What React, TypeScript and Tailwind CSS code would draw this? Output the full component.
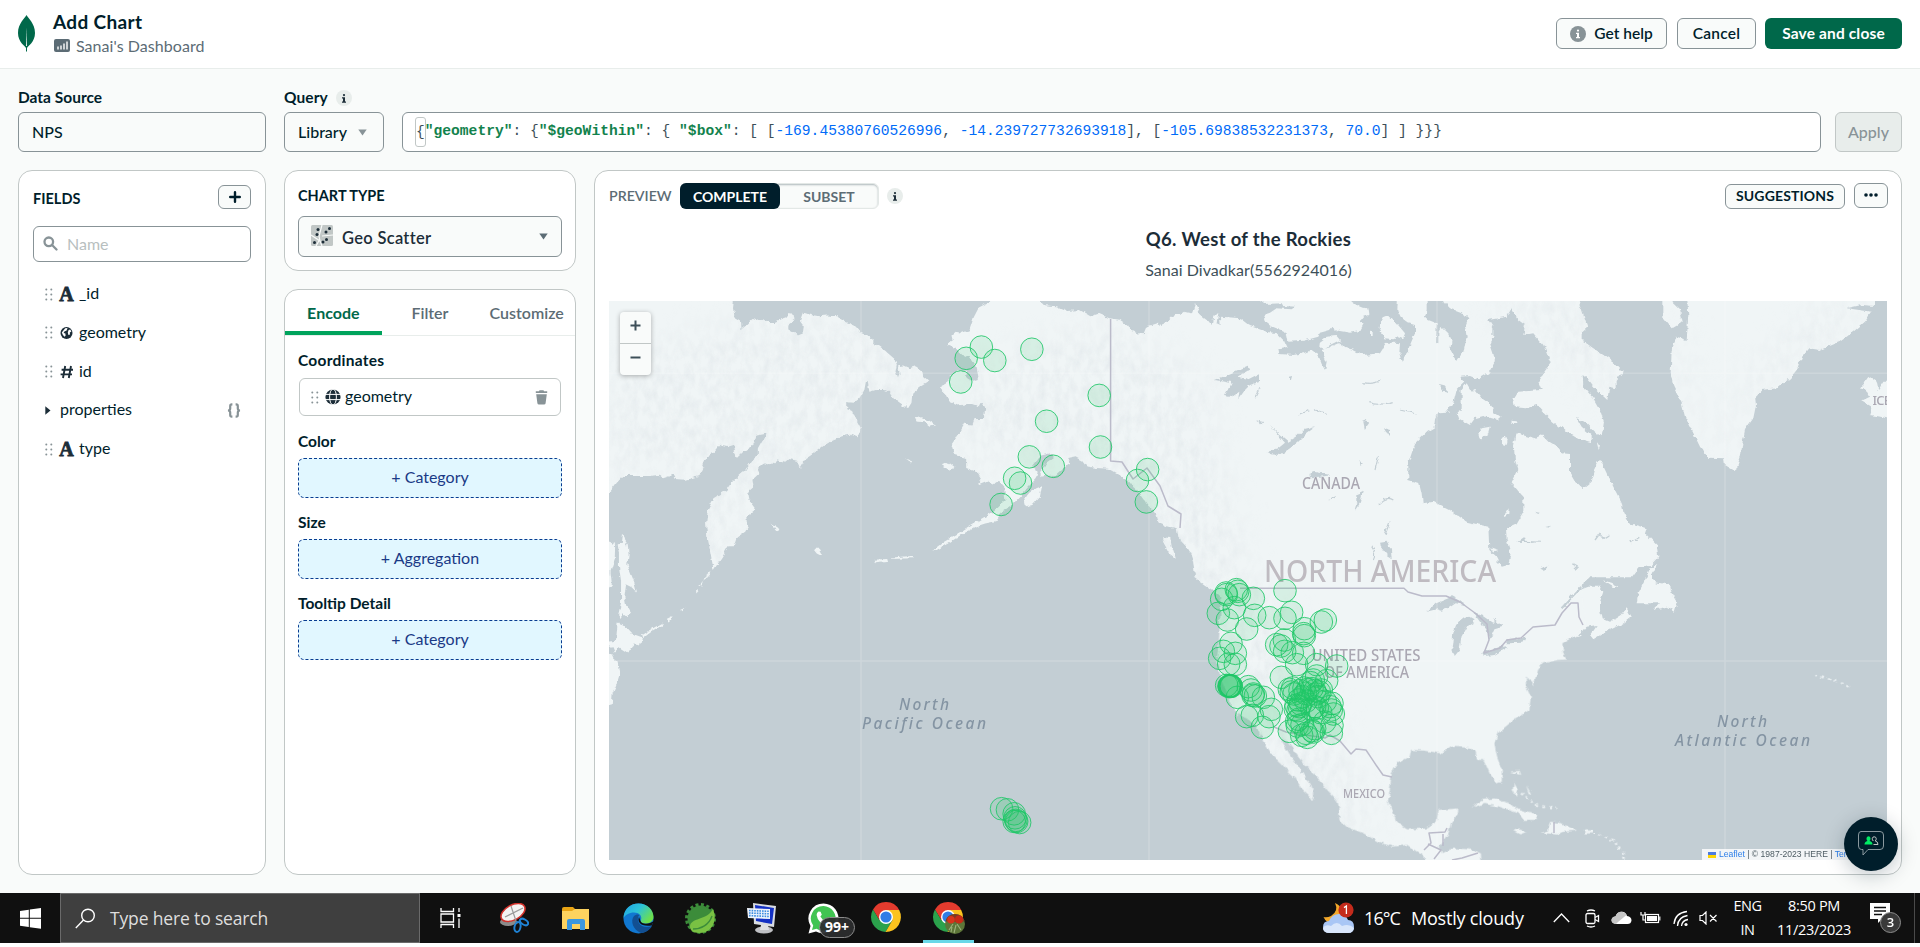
import React from "react";

/* ---------- small icons ---------- */

function Grip() {
  return (
    <svg width="8" height="13" viewBox="0 0 8 13" fill="#889397" className="shrink-0">
      {[1.5, 6.5, 11.5].map((y) => (
        <g key={y}>
          <circle cx="1.3" cy={y} r="1" />
          <circle cx="6.3" cy={y} r="1" />
        </g>
      ))}
    </svg>
  );
}

function LetterA() {
  return (
    <span className="w-[15px] text-center font-['Liberation_Serif',serif] text-[20px] leading-none font-bold text-[#1c2d38] [-webkit-text-stroke:0.8px_#1c2d38]">
      A
    </span>
  );
}

function Earth() {
  return (
    <svg width="14" height="14" viewBox="0 0 14 14" className="mx-[1px] shrink-0">
      <circle cx="6.5" cy="7" r="6" fill="#1c2d38" />
      <path d="M5.2 2.2 L7.5 2 L6.6 4.4 L4.4 5.4 L3.6 7 L5.4 7.6 L5.6 9.8 L4.4 10.8 L2.8 8.8 L1.8 6.4 Z M8.6 4 L10.2 3.6 L11.4 5.6 L9.8 6.4 L10 8.4 L8.4 9 L7.8 6.6 Z" fill="#fff" />
    </svg>
  );
}

function Hash() {
  return (
    <svg width="14" height="14" viewBox="0 0 14 14" className="mx-[1px] shrink-0" stroke="#1c2d38" strokeWidth="1.9" fill="none">
      <path d="M5.2 1 L3 13 M11 1 L8.8 13 M1.6 4.7 H13 M0.6 9.4 H12" />
    </svg>
  );
}

function Globe() {
  return (
    <svg width="16" height="16" viewBox="0 0 16 16" className="shrink-0">
      <circle cx="8" cy="8" r="7.6" fill="#1c2d38" />
      <g stroke="#fff" strokeWidth="1" fill="none">
        <path d="M0 5.4 H16 M0 10.6 H16" />
        <ellipse cx="8" cy="8" rx="3.4" ry="8" />
      </g>
    </svg>
  );
}

function Info() {
  return (
    <span className="flex h-4 w-4 items-center justify-center rounded-full bg-[#e8edeb]">
      <svg width="6" height="9" viewBox="0 0 6 9" fill="#1c2d38">
        <circle cx="3" cy="1.1" r="1.1" />
        <path d="M1 3.2 H4 V7.6 H5 V8.8 H1 V7.6 H2 V4.4 H1 Z" />
      </svg>
    </span>
  );
}

function Caret({ color }: { color: string }) {
  return (
    <svg width="9" height="7" viewBox="0 0 9 7" fill={color}>
      <path d="M0.3 0.5 H8.7 L4.5 6.6 Z" />
    </svg>
  );
}

/* ---------- map ---------- */

type Point = [number, number];

const tileA = "translate(600 290) scale(0.42091 0.36352)";
const tileB = "translate(1160 290) scale(0.33333)";
const tileC = "translate(1500 290) scale(0.33333)";
const tileD = "translate(1160 560) scale(0.4847 0.33333)";

const landA = [
  "0,0 316,0 318,30 316,50 320,75 335,85 336,108 345,100 362,80 372,85 385,78 400,88 415,88 430,80 442,75 448,66 460,68 462,82 450,90 447,105 465,118 470,125 482,120 484,100 475,85 482,62 500,68 520,72 540,70 562,72 585,88 605,98 620,118 640,128 655,150 680,170 700,190 705,205 702,225 708,240 712,228 708,210 720,208 735,215 750,210 765,222 768,240 780,252 765,262 755,272 742,285 740,310 732,325 715,312 700,300 690,282 675,275 655,275 640,280 636,250 632,250 628,275 615,300 603,310 585,308 585,325 600,332 608,355 620,380 612,405 595,398 575,402 550,415 530,430 510,448 488,465 475,490 468,470 450,465 440,475 420,468 405,482 388,475 375,490 378,505 362,522 365,545 350,560 352,572 370,600 358,612 350,620 352,650 345,665 325,680 318,705 305,705 290,735 270,770 262,720 255,680 252,640 256,605 272,570 300,550 312,530 330,510 345,495 360,470 375,455 375,435 385,415 398,395 372,400 365,425 345,440 325,462 320,440 318,425 305,430 285,425 270,445 250,460 243,480 248,490 238,510 225,515 205,522 180,520 175,508 150,518 140,508 120,512 100,512 55,512 40,530 21,560 0,580",
  "55,668 60,690 66,700 68,730 65,755 75,785 82,805 88,832 75,818 62,810 58,845 62,870 72,890 65,900 55,892 48,902 43,895 50,860 50,800 45,760 45,720 42,700 52,695",
  "0,690 21,690 36,700 35,740 25,775 28,810 21,820 0,820",
  "42,915 55,920 75,945 100,955 95,978 80,975 65,1000 45,985 35,995 30,980 0,985 0,970 38,965",
  "0,995 33,1000 30,1012 42,1025 46,1060 38,1090 30,1110 28,1140 0,1145",
  "945,0 930,30 900,48 888,75 878,110 860,118 845,115 835,125 838,138 825,150 845,160 862,180 880,190 895,215 900,245 885,250 870,240 872,222 850,222 835,235 825,255 805,268 820,285 830,308 850,318 880,312 900,320 905,308 915,325 912,355 890,355 885,370 865,368 850,400 835,425 840,445 850,460 870,465 870,490 895,500 905,520 898,535 920,525 935,535 948,525 960,540 963,580 935,610 905,630 870,655 850,670 820,690 795,712 790,720 800,715 830,695 860,672 890,655 915,645 935,640 950,615 980,590 1000,565 1015,545 1035,520 1040,500 1025,490 1048,455 1075,448 1078,460 1060,475 1050,495 1045,515 1060,510 1080,512 1100,490 1115,478 1110,465 1130,460 1145,470 1155,485 1180,490 1210,492 1230,505 1250,520 1260,535 1275,550 1300,590 1318,610 1325,640 1345,650 1370,655 1378,665 1380,690 1400,715 1412,745 1415,775 1412,790 1430,805 1455,825 1480,850 1478,880 1472,920 1475,960 1470,1000 1475,1040 1490,1080 1510,1130 1530,1170 1568,1200 1568,118 1550,98 1520,82 1488,75 1475,95 1472,75 1465,55 1455,85 1448,98 1440,82 1425,70 1415,40 1405,60 1395,62 1380,55 1365,70 1345,75 1335,90 1310,100 1298,102 1292,118 1275,120 1262,112 1255,98 1235,82 1210,78 1185,65 1165,72 1140,55 1110,58 1085,45 1055,42 1045,30 1040,0",
  "748,352 765,350 780,360 796,372 785,376 772,364 752,362",
  "812,482 828,474 842,486 832,497",
  "1008,575 1020,558 1038,545 1050,540 1045,570 1030,590 1012,595",
  "728,465 742,472 736,478",
  "405,640 424,655 420,662",
  "508,712 520,712 528,730 515,722",
  "650,742 680,740 682,748 655,752",
  "690,736 742,732 742,738 690,740",
  "262,772 260,785 248,800 252,785",
  "245,800 240,815 236,812",
  "100,950 130,928 150,915 148,922 120,942 102,958",
  "158,905 176,895 166,912",
  "190,880 203,874 196,884",
  "228,826 234,828 229,835",
  "1335,680 1355,682 1358,705 1368,738 1352,725 1340,700",
];

const landB = ["60,0 1200,0 1200,900 165,900 160,895 130,870 105,850 100,815 90,785 75,760 55,740 50,715 25,700 0,660 0,105 60,75"];

const landC = [
  "0,0 232,0 235,33 245,60 262,110 245,125 245,150 280,175 310,195 340,215 368,245 350,270 350,295 328,290 322,330 300,310 280,290 260,265 248,255 250,290 280,325 300,360 312,395 305,440 285,425 260,400 228,380 245,410 275,435 275,460 240,450 200,425 165,395 130,350 85,345 45,355 42,335 60,305 125,300 115,270 155,220 145,190 120,155 95,125 75,140 72,130 90,115 60,85 50,65 35,60 25,80 0,75",
  "45,440 55,430 100,442 125,435 165,470 170,488 210,492 210,550 225,575 248,597 275,575 285,540 300,508 325,560 345,600 365,640 370,665 388,700 440,715 435,730 470,765 475,800 450,828 415,835 395,862 270,862 252,875 245,898 265,890 300,890 310,905 300,935 300,960 305,985 330,995 350,985 365,975 380,955 395,980 370,1000 340,1015 310,1030 280,1048 270,1035 290,1005 260,1010 240,1035 200,1048 150,1058 0,1058 0,830 25,825 32,800 15,715 50,700 72,665 70,630 35,580 55,540 42,490",
  "475,822 455,850 460,875 510,885 515,910 532,940 525,965 500,950 460,960 480,940 410,940 415,910 435,870 450,835",
  "305,870 335,878 360,890 340,892",
  "490,0 515,0 515,36 540,60 548,95 515,115 490,85",
  "560,0 1125,0 1125,48 1085,45 1040,55 1115,65 1095,95 1060,125 1020,155 960,180 925,175 905,200 890,240 870,265 830,295 785,300 765,320 768,345 760,385 735,420 728,455 722,500 712,530 700,540 675,525 672,505 625,503 600,470 578,425 555,380 545,340 520,290 512,250 515,180 530,140 560,150 565,75",
  "1078,295 1105,258 1130,275 1135,300 1150,275 1190,275 1190,390 1130,378 1108,375 1115,350 1085,332 1110,320 1100,300",
  "290,455 300,470 296,480",
  "35,392 50,394 50,402 40,402",
  "8,442 18,436 18,455 8,470 3,460",
];

const landD = [
  "69,-10 72,40 107,85 124,110 125,150 122,230 120,270 117,300 124,350 138,400 144,430 162,465 186,480 203,510 213,545 225,570 235,590 250,610 268,640 280,655 290,685 305,705 314,724 318,705 310,670 298,650 285,620 275,600 262,570 250,540 258,535 270,560 285,590 302,620 325,650 345,690 365,720 370,745 370,780 385,800 420,820 450,845 480,860 510,855 530,875 545,885 550,930 664,930 662,880 640,868 610,865 595,870 580,880 575,860 585,840 595,820 600,790 615,760 615,745 575,750 570,785 550,805 510,808 490,790 480,760 470,725 475,680 478,640 490,610 515,590 518,570 545,572 580,580 600,560 625,562 650,570 655,600 668,600 680,640 695,670 705,665 705,630 695,590 690,550 700,515 730,480 762,450 765,410 755,380 755,350 768,365 770,380 780,330 790,310 820,300 840,298 832,280 830,250 850,230 880,198 868,80 860,52 860,-10",
  "643,742 665,720 690,715 720,730 740,750 775,765 778,780 750,780 740,760 700,740 670,732",
  "785,820 800,812 805,785 830,790 858,812 830,816 820,824 800,820",
  "728,812 742,808 756,816 742,823",
  "875,811 896,811 896,820 876,820",
  "722,635 742,633 745,645 735,640",
  "730,665 740,690 735,710 728,690",
  "755,675 765,700 762,705",
];

const waterB = [
  "0,0 305,0 305,33 315,42 365,40 370,48 405,50 395,58 350,55 330,68 310,75 315,95 335,110 360,120 380,130 385,155 430,152 475,140 480,128 510,120 518,110 535,122 570,128 600,122 612,100 598,95 610,80 625,75 622,55 600,50 575,33 575,0 715,0 712,60 722,80 745,100 765,105 765,130 750,165 735,200 725,215 718,190 720,160 700,158 680,158 660,190 610,195 580,180 550,170 535,160 500,175 485,180 500,215 495,240 485,222 475,195 455,180 430,190 400,195 358,192 355,175 380,170 372,152 350,130 320,125 270,108 240,85 205,82 180,80 182,105 170,100 175,65 160,80 155,108 140,90 120,75 105,42 95,70 75,65 60,75 40,75 20,95 0,105",
  "800,0 850,0 850,33 870,55 910,70 925,85 915,110 920,140 912,180 890,215 870,180 875,150 865,130 845,110 835,130 835,160 828,155 830,100 805,90 795,80 800,60",
  "985,90 1015,85 1040,80 1055,55 1075,90 1095,105 1090,135 1120,130 1150,165 1172,220 1150,250 1135,275 1145,300 1075,305 1060,330 1065,352 1100,355 1130,345 1150,365 1180,395 1206,415 1206,492 1190,470 1165,455 1145,435 1125,445 1070,430 1062,470 1065,510 1075,540 1055,580 1090,620 1090,665 1070,700 1038,715 1040,750 1052,790 1045,825 1025,830 1010,800 988,780 985,710 920,695 870,660 820,635 788,640 785,610 778,580 745,570 745,520 765,460 800,425 825,410 828,385 835,370 860,368 880,340 890,300 915,275 900,260 930,258 955,268 985,250 1005,215 1000,190 990,160 1000,140 1000,115",
  "165,270 215,250 260,230 272,238 235,260 265,268 300,250 300,275 270,285 255,300 235,328 238,305 215,322 195,318 215,280",
  "320,485 355,475 375,458 330,405 355,430 385,455 410,440 430,420 465,412 440,430 415,455 390,475 360,495 330,493",
  "660,755 680,752 693,780 695,805 680,795 662,770",
  "448,552 465,546 515,556 480,560 450,562",
  "592,612 608,605 600,640 585,662 592,640",
  "835,285 855,290 866,306 850,302",
  "607,395 620,390 627,400 612,420",
  "672,415 690,420 690,434 678,426",
  "595,510 608,520 602,528",
  "505,628 525,618 522,626",
  "386,258 400,255 396,270",
  "285,390 310,396 304,403",
  "1125,665 1142,668 1138,672",
  "1155,708 1175,704 1170,710",
  "1072,755 1092,742 1095,752 1140,755 1140,758",
  "1145,835 1162,828 1148,845",
];

const islandsB = [
  "655,110 668,85 685,78 710,100 735,130 730,148 715,142 700,148 675,145 665,130",
  "480,155 500,140 530,138 540,150 510,165 495,178 478,170",
  "920,280 935,305 945,300 965,325 995,345 1000,365 1022,380 1010,390 970,378 945,385 930,405 895,385 890,370 905,360 905,300",
  "955,430 965,415 990,410 985,430 960,448",
  "1026,445 1034,436 1040,450 1036,468 1026,465",
  "1053,392 1070,394 1074,402 1060,402",
  "630,125 638,126 638,138 630,138",
  "1030,680 1046,655 1045,672 1035,680",
  "990,772 1015,780 1000,785",
];

const waterD = [
  "550,155 570,130 595,115 600,108 618,122 630,135 610,130 595,145 580,152 570,148",
  "605,220 612,190 625,175 640,170 652,180 635,195 622,230 618,270 608,288 602,260",
  "645,155 665,165 690,190 690,178 708,200 690,208 680,240 672,210 660,185",
  "665,275 700,262 720,258 690,285 668,288",
  "712,238 755,233 750,248 715,250",
  "700,0 715,0 720,12 705,18",
];

const alaskaPoints: Point[] = [
  [906, 157], [870, 188], [938, 194], [1026, 163], [857, 253], [1186, 290], [1061, 361], [1189, 432],
  [1020, 459], [1077, 485], [985, 518], [999, 531], [953, 590], [1301, 494], [1277, 524], [1298, 583],
  [954, 1427], [968, 1430], [984, 1441], [984, 1462], [988, 1459], [986, 1452], [990, 1462], [997, 1465],
];

const westPoints: Point[] = [
  [138, 99], [169, 89], [173, 94], [125, 118], [139, 104], [178, 104], [220, 115], [163, 143], [115, 160],
  [142, 180], [200, 207], [224, 166], [268, 173], [315, 92], [335, 157], [315, 175], [436, 180], [424, 186],
  [373, 206], [371, 221], [373, 227], [290, 254], [313, 240], [303, 258], [314, 274], [337, 278], [153, 250],
  [130, 274], [166, 280], [119, 295], [146, 312], [166, 313], [371, 280], [350, 314], [410, 314], [470, 318],
  [304, 352], [140, 376], [147, 378], [150, 378], [152, 379], [149, 377], [153, 377], [148, 380], [154, 379],
  [172, 412], [205, 380], [213, 390], [220, 402], [226, 408], [219, 406], [250, 412], [274, 448], [200, 470],
  [217, 466], [267, 470], [247, 502], [410, 348], [400, 360], [440, 362], [392, 368], [328, 388], [334, 396],
  [342, 402], [338, 384], [360, 392], [372, 384], [384, 388], [376, 400], [396, 386], [404, 392], [418, 396],
  [408, 402], [424, 390], [368, 410], [414, 410], [356, 420], [348, 436], [358, 440], [354, 452], [362, 432],
  [378, 424], [346, 448], [404, 440], [412, 444], [396, 448], [436, 424], [456, 430], [450, 440], [460, 462],
  [454, 450], [422, 458], [356, 478], [350, 484], [366, 494], [352, 498], [396, 512], [400, 516], [378, 520],
  [434, 486], [456, 496], [454, 520], [328, 514], [365, 526], [382, 532], [404, 506],
];

const sites: Point[] = [
  ...alaskaPoints.map(([x, y]): Point => [600 + x / 2.3758, 290 + y / 2.751]),
  ...westPoints.map(([x, y]): Point => [1180 + x / 3, 560 + y / 3]),
];

function Shapes({ at, shapes }: { at: string; shapes: string[] }) {
  return (
    <g transform={at}>
      {shapes.map((points) => (
        <polygon key={points} points={points} />
      ))}
    </g>
  );
}

function WorldMap() {
  return (
    <svg width="1278" height="559" viewBox="609 301 1278 559" className="block">
      <defs>
        <filter id="coast" filterUnits="userSpaceOnUse" x="590" y="280" width="1320" height="600">
          <feTurbulence type="fractalNoise" baseFrequency="0.18" numOctaves="2" seed="4" result="n" />
          <feDisplacementMap in="SourceGraphic" in2="n" scale="5" xChannelSelector="R" yChannelSelector="G" />
        </filter>
        <filter id="relief" filterUnits="userSpaceOnUse" x="609" y="301" width="1278" height="559">
          <feTurbulence type="fractalNoise" baseFrequency="0.13 0.07" numOctaves="4" seed="11" />
          <feColorMatrix values="0 0 0 0 0.72  0 0 0 0 0.77  0 0 0 0 0.8  1.3 0 0 0 -0.46" />
        </filter>
        <filter id="soft">
          <feGaussianBlur stdDeviation="16" />
        </filter>
        <g id="land">
          <Shapes at={tileA} shapes={landA} />
          <Shapes at={tileB} shapes={landB} />
          <Shapes at={tileC} shapes={landC} />
          <Shapes at={tileD} shapes={landD} />
        </g>
        <mask id="land-mask" maskUnits="userSpaceOnUse" x="609" y="301" width="1278" height="559">
          <g filter="url(#coast)">
            <use href="#land" fill="#fff" />
          </g>
        </mask>
        <mask id="range-mask" maskUnits="userSpaceOnUse" x="609" y="301" width="1278" height="559">
          <g filter="url(#soft)" fill="#fff" fillOpacity="0.75">
            <polygon points="640,350 760,320 860,320 940,400 860,440 740,500 720,610 690,600 690,460 609,480 609,380" />
            <polygon points="970,370 1100,320 1210,380 1220,470 1250,580 1310,640 1330,720 1380,840 1330,820 1250,730 1180,620 1160,560 1110,470 1010,450 960,480 970,420" />
            <polygon points="1480,301 1580,301 1620,380 1600,400 1560,350 1520,330" />
            <polygon points="1830,301 1880,301 1800,360 1750,400 1735,460 1720,450 1740,380" />
            <polygon points="1672,330 1690,350 1690,400 1710,450 1690,430 1672,380" />
          </g>
        </mask>
      </defs>

      <rect x="609" y="301" width="1278" height="559" fill="#c3ced4" />
      <g filter="url(#coast)">
        <use href="#land" fill="#f0f5f6" />
      </g>
      <g mask="url(#land-mask)">
        <g mask="url(#range-mask)">
          <rect x="609" y="301" width="1278" height="559" filter="url(#relief)" />
        </g>
      </g>
      <g filter="url(#coast)">
        <g fill="#c3ced4">
          <Shapes at={tileB} shapes={waterB} />
          <Shapes at={tileD} shapes={waterD} />
        </g>
        <g fill="#f0f5f6">
          <Shapes at={tileB} shapes={islandsB} />
        </g>
        <g fill="none" stroke="#c3ced4">
          <path transform={tileC} d="M245 890 L218 918 L188 952" strokeWidth="7" />
          <path
            transform={tileB}
            d="M610 278 Q640 285 663 270 M628 338 Q660 350 698 335 M720 360 L770 372 M635 770 Q650 790 640 810 M690 695 L675 735 M655 500 L645 540 M655 645 Q680 615 700 630 M415 375 L445 362 M465 360 L500 370 M285 325 L300 295"
            strokeWidth="3.5"
          />
          <path transform={tileC} d="M285 750 L300 730 L312 745 L328 735 M390 758 L418 742 M218 820 L232 828 L222 838 M122 838 L142 828" strokeWidth="4" />
        </g>
        <g fill="none" stroke="#eef3f5" strokeWidth="5" strokeDasharray="6 9" transform={tileD}>
          <path d="M905 822 L935 840 L955 880 L960 900 M745 700 L775 735 L820 745 M1350 345 L1400 365 L1430 385" />
        </g>
      </g>

      <g stroke="#fff" strokeOpacity="0.18" strokeWidth="1.5">
        <path d="M861 301 V860 M1149 301 V860 M1437 301 V860 M1725 301 V860 M609 373.3 H1887 M609 661 H1887" />
      </g>

      <g fill="none" stroke="#bbbbca" strokeWidth="1.5" strokeLinejoin="round">
        <path d="M1110.6 319 V461 L1122 462 L1133 479 L1147 468 L1160 486 L1168 506 L1181 514 L1180 528" />
        <path d="M1240 588.3 H1404 L1408 592 L1422 596 L1446 596 L1460 602 L1475 613 L1487 624 L1489 640 L1484 653 L1500 648 L1507 640 L1521 638 L1533 627 L1555 625 L1562 613 L1571 603 L1578 603 L1579 617 L1583 625" />
        <path d="M1274 727 L1286 732 L1325 738 L1330 735 L1340 741 L1351 754 L1356 749 L1366 750 L1376 765 L1383 775 L1392 777" />
        <path d="M1424 850 L1431 843 L1429 833 L1445 832 L1447 828 M1443 834 L1443 846 M1428 844 L1441 850 L1434 859 M1478 853 L1462 858 L1452 860 M1554 822 V833" />
      </g>

      <g fontFamily="'Noto Sans', 'Open Sans', sans-serif" fontWeight="500" fill="#aaa7b2">
        <text x="1264" y="581.5" fontSize="30.5" fill="#bfbbc1" textLength="232" lengthAdjust="spacingAndGlyphs">NORTH AMERICA</text>
        <text x="1302" y="489" fontSize="15.5" textLength="58" lengthAdjust="spacingAndGlyphs">CANADA</text>
        <text x="1311.5" y="661" fontSize="15.5" textLength="109" lengthAdjust="spacingAndGlyphs">UNITED STATES</text>
        <text x="1324" y="678" fontSize="15.5" textLength="85" lengthAdjust="spacingAndGlyphs">OF AMERICA</text>
        <text x="1343" y="798" fontSize="12.5" textLength="42" lengthAdjust="spacingAndGlyphs">MEXICO</text>
        <text x="1872.5" y="405" fontSize="13" letterSpacing="-0.8">ICE</text>
      </g>
      <g fontFamily="'Noto Sans', 'Open Sans', sans-serif" fontStyle="italic" fontWeight="500" fontSize="15.5" fill="#8494a3">
        <text x="899" y="709.5" textLength="52" letterSpacing="2">North</text>
        <text x="862" y="728.5" textLength="126" letterSpacing="2">Pacific Ocean</text>
        <text x="1717" y="727" textLength="52" letterSpacing="2">North</text>
        <text x="1675" y="745.5" textLength="137" letterSpacing="2">Atlantic Ocean</text>
      </g>

      <g fill="#21c466" fillOpacity="0.12" stroke="#1fc767" strokeOpacity="0.85" strokeWidth="1">
        {sites.map(([x, y], i) => (
          <circle key={i} cx={x} cy={y} r="11.3" />
        ))}
      </g>
    </svg>
  );
}

/* ---------- panels ---------- */

function Field({ icon, name }: { icon: React.ReactNode; name: string }) {
  return (
    <li className="flex h-[38.75px] items-center pl-[12px]">
      <Grip />
      <span className="ml-[6px] flex w-[15px] justify-center">{icon}</span>
      <span className="-mt-[2px] ml-[5px] text-[16px]">{name}</span>
    </li>
  );
}

function Drop({ label, action }: { label: string; action: string }) {
  return (
    <div className="flex flex-col pb-[15px]">
      <h3 className="mb-[6px] flex h-5 items-center text-[15.5px] font-bold">{label}</h3>
      <button className="h-[40px] rounded-[6px] border border-dashed border-[#083c90] bg-[#e1f7ff] pb-[2px] text-[16px] text-[#1a3a86]">
        + {action}
      </button>
    </div>
  );
}

function Header() {
  return (
    <header className="flex h-[69px] shrink-0 items-start border-b border-[#e8edeb] bg-white pr-[18px] pl-[18px]">
      <svg width="17" height="37" viewBox="0 0 17 37" className="mt-[15px] shrink-0">
        <path d="M8.5 0 C10 3 17 8.5 17 18 C17 27 10 31 8.9 33 L8.9 36 H8.1 L8.1 33 C7 31 0 27 0 18 C0 8.5 7 3 8.5 0 Z" fill="#00684a" />
        <path d="M8.5 12 L9 33 L8.8 36 H8.2 L8 33 Z" fill="#fff" />
        <path d="M8 31 H9 V36.5 H8 Z" fill="#00684a" />
      </svg>
      <div className="mt-[10px] ml-[18px] flex flex-col">
        <h1 className="text-[19px] leading-6 font-bold tracking-[0.35px]">Add Chart</h1>
        <div className="flex h-[23px] items-center">
          <svg width="16" height="13" viewBox="0 0 16 13" className="ml-px">
            <rect width="16" height="13" rx="2" fill="#5c6c75" />
            <path d="M4 7.5 V10.5 M7 6.5 V10.5 M10 4.5 V10.5 M13 2.5 V10.5" stroke="#fff" strokeWidth="1.4" />
          </svg>
          <span className="ml-[6px] text-[16px] tracking-[0.05px] text-[#5c6c75]">Sanai's Dashboard</span>
        </div>
      </div>
      <div className="mt-[18px] ml-auto flex h-[31px] text-[15.5px] font-semibold">
        <button className="flex w-[111px] items-center justify-center gap-[8px] rounded-[6px] border border-[#889397] bg-[#f9fbfa]">
          <span className="flex h-4 w-4 items-center justify-center rounded-full bg-[#889397]">
            <svg width="6" height="10" viewBox="0 0 6 9" fill="#fff">
              <circle cx="3" cy="1.1" r="1.1" />
              <path d="M1 3.2 H4 V7.6 H5 V8.8 H1 V7.6 H2 V4.4 H1 Z" />
            </svg>
          </span>
          Get help
        </button>
        <button className="ml-[10px] w-[79px] rounded-[6px] border border-[#889397] bg-[#f9fbfa] tracking-[0.2px]">Cancel</button>
        <button className="ml-[9px] w-[137px] rounded-[6px] bg-[#00684a] font-bold tracking-[0.15px] text-white">Save and close</button>
      </div>
    </header>
  );
}

function QueryBar() {
  return (
    <div className="flex items-end gap-[18px]">
      <div className="flex w-[248px] flex-col">
        <label className="flex h-[28px] items-center text-[15.5px] font-bold">Data Source</label>
        <div className="flex h-[40px] items-center rounded-[6px] border border-[#889397] bg-[#f9fbfa] pl-[13px] text-[16px] font-medium">NPS</div>
      </div>
      <div className="flex w-[100px] flex-col">
        <label className="flex h-[28px] items-center text-[15.5px] font-bold tracking-[0.1px]">
          Query
          <span className="ml-[8px]"><Info /></span>
        </label>
        <button className="flex h-[40px] items-center rounded-[6px] border border-[#889397] bg-[#f9fbfa] pl-[13px] text-[16px] font-medium">
          Library
          <span className="ml-auto pr-[16px]"><Caret color="#889397" /></span>
        </button>
      </div>
      <div className="flex h-[40px] flex-1 items-center rounded-[6px] border border-[#889397] bg-white pl-[12px] font-['Liberation_Mono',monospace] text-[14.62px] whitespace-pre text-[#3d4f58]">
        <span className="-mr-[2px] rounded-[3px] border border-[#c1c7c6] py-[5px] leading-[18px]">{"{"}</span>
        <b className="ml-px text-[#12824d]">"geometry"</b>: {"{"}
        <b className="text-[#12824d]">"$geoWithin"</b>: {"{ "}
        <b className="text-[#12824d]">"$box"</b>{": [ ["}
        <span className="text-[#016bf8]">-169.45380760526996</span>{", "}
        <span className="text-[#016bf8]">-14.239727732693918</span>{"], ["}
        <span className="text-[#016bf8]">-105.69838532231373</span>{", "}
        <span className="text-[#016bf8]">70.0</span>{"] ] }}}"}
      </div>
      <button className="-ml-[4px] h-[40px] w-[67px] rounded-[6px] border border-[#c1c7c6] bg-[#e8edeb] text-[16px] font-medium text-[#889397]">Apply</button>
    </div>
  );
}

function FieldsPanel() {
  return (
    <section className="flex w-[248px] flex-col rounded-[14px] border border-[#c1c7c6] bg-white px-[14px] pt-[14px]">
      <div className="flex items-center justify-between">
        <h2 className="pt-[3px] text-[14.5px] font-bold">FIELDS</h2>
        <button className="flex h-[24px] w-[33px] items-center justify-center rounded-[6px] border border-[#889397] bg-[#f9fbfa]">
          <svg width="12" height="12" viewBox="0 0 12 12" stroke="#001e2b" strokeWidth="2.4" strokeLinecap="round">
            <path d="M6 1.2 V10.8 M1.2 6 H10.8" />
          </svg>
        </button>
      </div>
      <div className="mt-[16px] flex h-[36px] items-center rounded-[6px] border border-[#889397] pl-[9px]">
        <svg width="15" height="15" viewBox="0 0 15 15" fill="none" stroke="#889397" strokeWidth="2.3" strokeLinecap="round">
          <circle cx="5.8" cy="5.8" r="4.3" />
          <path d="M9.3 9.3 L13.5 13.5" />
        </svg>
        <span className="ml-[9px] text-[16px] text-[#b8bfbf]">Name</span>
      </div>
      <ul className="mt-[13px]">
        <Field icon={<LetterA />} name="_id" />
        <Field icon={<Earth />} name="geometry" />
        <Field icon={<Hash />} name="id" />
        <li className="flex h-[38.75px] items-center pl-[12px]">
          <svg width="6" height="9" viewBox="0 0 6 9" fill="#1c2d38">
            <path d="M0.3 0.3 L5.5 4.5 L0.3 8.7 Z" />
          </svg>
          <span className="-mt-[2px] ml-[9px] text-[16px]">properties</span>
          <svg width="14" height="15" viewBox="0 0 14 15" fill="none" stroke="#889397" strokeWidth="2.2" className="mr-[10px] ml-auto">
            <path d="M5.4 1.4 H4.8 Q3.2 1.4 3.2 3 V5.4 Q3.2 7.4 1 7.5 Q3.2 7.6 3.2 9.6 V12 Q3.2 13.6 4.8 13.6 H5.4 M8.6 1.4 H9.2 Q10.8 1.4 10.8 3 V5.4 Q10.8 7.4 13 7.5 Q10.8 7.6 10.8 9.6 V12 Q10.8 13.6 9.2 13.6 H8.6" />
          </svg>
        </li>
        <Field icon={<LetterA />} name="type" />
      </ul>
    </section>
  );
}

function ChartTypePanel() {
  return (
    <section className="flex h-[101px] shrink-0 flex-col rounded-[14px] border border-[#c1c7c6] bg-white px-[13px] pt-[15px]">
      <h2 className="flex h-5 items-center text-[14.5px] font-bold">CHART TYPE</h2>
      <button className="mt-[10px] flex h-[41px] items-center rounded-[6px] border border-[#889397] bg-[#f9fbfa] pl-[12px]">
        <svg width="22" height="21" viewBox="0 0 22 21" className="-mt-[3px]">
          <rect width="22" height="21" rx="1.5" fill="#c1c7c6" />
          <path d="M0 10 L9 16 L11 21 M9 16 L8 11 L11 0 M11 11 L22 10 M5 21 L9 14" stroke="#f9fbfa" strokeWidth="1.2" fill="none" />
          <g fill="#1c2d38">
            <circle cx="7" cy="4.5" r="1.5" /><circle cx="6" cy="9.5" r="1.5" /><circle cx="18.5" cy="3.5" r="1.5" />
            <circle cx="15" cy="7" r="1.5" /><circle cx="15.5" cy="14.5" r="1.5" /><circle cx="12" cy="17" r="1.5" />
            <circle cx="3.5" cy="17.5" r="1.5" />
          </g>
        </svg>
        <span className="ml-[9px] pt-[3px] text-[16.5px] font-semibold tracking-[0.3px] text-[#1c2d38]">Geo Scatter</span>
        <span className="mr-[13px] ml-auto"><Caret color="#5c6c75" /></span>
      </button>
    </section>
  );
}

function EncodePanel() {
  return (
    <section className="flex flex-1 flex-col overflow-hidden rounded-[14px] border border-[#c1c7c6] bg-white">
      <nav className="grid h-[46px] shrink-0 grid-cols-3 border-b border-[#e8edeb] text-[16px] font-semibold text-[#5c6c75]">
        <span className="flex items-center justify-center rounded-t-[2px] border-b-4 border-[#00a35c] pt-[4px] font-bold text-[#00684a]">Encode</span>
        <span className="flex items-center justify-center">Filter</span>
        <span className="flex items-center justify-center">Customize</span>
      </nav>
      <div className="flex flex-col px-[13px] pt-[15px]">
        <h3 className="mb-[7px] flex h-5 items-center text-[15.5px] font-bold tracking-[0.25px]">Coordinates</h3>
        <div className="mx-px mb-[16px] flex h-[38px] items-center rounded-[6px] border border-[#c1c7c6] pr-[12px] pl-[11px]">
          <Grip />
          <span className="ml-[6px]"><Globe /></span>
          <span className="-mt-[3px] ml-[4px] text-[16px]">geometry</span>
          <svg width="13" height="15" viewBox="0 0 13 15" fill="#889397" className="ml-auto">
            <path d="M4.5 0.3 H8.5 L9 1.2 H12.2 V3 H0.8 V1.2 H4 Z M1.2 4.2 H11.8 L10.6 13.2 Q10.4 14.6 9 14.6 H4 Q2.6 14.6 2.4 13.2 Z" />
          </svg>
        </div>
        <Drop label="Color" action="Category" />
        <Drop label="Size" action="Aggregation" />
        <Drop label="Tooltip Detail" action="Category" />
      </div>
    </section>
  );
}

function PreviewPanel() {
  return (
    <section className="flex flex-1 flex-col rounded-[14px] border border-[#c1c7c6] bg-white pt-[11px] pr-[13px] pl-[14px]">
      <div className="flex h-[28px] items-center">
        <span className="w-[71px] text-[14.2px] font-semibold text-[#5c6c75]">PREVIEW</span>
        <div className="flex h-[26px] w-[199px] rounded-[6px] border border-[#e3e8e6] bg-[#f9fbfa] text-[14px] font-bold shadow-[inset_0_1px_2px_rgba(0,30,43,0.3)]">
          <span className="-my-px -ml-px flex w-[100px] items-center justify-center rounded-[6px] bg-[#001e2b] text-white">COMPLETE</span>
          <span className="flex flex-1 items-center justify-center text-[#5c6c75]">SUBSET</span>
        </div>
        <span className="ml-[8px]"><Info /></span>
        <button className="ml-auto h-[25px] w-[120px] rounded-[6px] border border-[#889397] bg-[#f9fbfa] text-[14px] leading-none font-bold tracking-[0.15px]">SUGGESTIONS</button>
        <button className="-mt-[2px] ml-[9px] flex h-[25px] w-[34px] items-center justify-center rounded-[6px] border border-[#889397] bg-[#f9fbfa]">
          <svg width="14" height="4" viewBox="0 0 14 4" fill="#001e2b">
            <circle cx="2" cy="2" r="1.8" /><circle cx="7" cy="2" r="1.8" /><circle cx="12" cy="2" r="1.8" />
          </svg>
        </button>
      </div>
      <h2 className="mt-[17px] text-center text-[18.5px] leading-6 font-bold tracking-[0.3px] text-[#1c2d38]">Q6. West of the Rockies</h2>
      <p className="mt-[7px] text-center text-[16px] leading-6 tracking-[0.05px] text-[#3d4f58]">Sanai Divadkar(5562924016)</p>
      <div className="relative mt-[19px] h-[559px] w-[1278px]">
        <WorldMap />
        <div className="absolute top-[11px] left-[11px] flex w-[31px] flex-col rounded-[4px] bg-[#f9fbfa] shadow-[0_1px_5px_rgba(0,0,0,0.3)]">
          <span className="flex h-[32px] items-center justify-center border-b border-[#c1c7c6] pb-[4px]">
            <svg width="11" height="11" stroke="#3d4f58" strokeWidth="2"><path d="M5.5 0.5 V10.5 M0.5 5.5 H10.5" /></svg>
          </span>
          <span className="flex h-[31px] items-center justify-center pb-[2px]">
            <svg width="11" height="11" stroke="#3d4f58" strokeWidth="2"><path d="M0.5 4.5 H10.5" /></svg>
          </span>
        </div>
        <div className="absolute right-0 bottom-0 flex h-[11px] w-[185px] items-center gap-[3px] overflow-hidden bg-white/80 pl-[6px] font-['Liberation_Sans',sans-serif] text-[8.6px] whitespace-nowrap text-[#4d5b63]">
          <svg width="8" height="6" className="shrink-0">
            <rect width="8" height="3" fill="#4c7be1" />
            <rect y="3" width="8" height="3" fill="#ffd500" />
          </svg>
          <span>
            <span className="text-[#2b7de9]">Leaflet</span> | © 1987-2023 HERE | <span className="text-[#2b7de9]">Terms of use</span>
          </span>
        </div>
        <div className="absolute right-[-11px] bottom-[-11px] flex h-[54px] w-[54px] items-center justify-center rounded-full bg-[#001e2b] shadow-[0_4px_20px_rgba(0,30,43,0.25)]">
          <svg width="28" height="28" viewBox="0 0 28 28" fill="none">
            <path d="M4 1.5 H23 Q26.5 1.5 26.5 5 V16 Q26.5 19.5 23 19.5 H11 L6 25 V19.5 H4.5 Q1.5 19.5 1.5 16 V5 Q1.5 1.5 4 1.5 Z" stroke="#9aa7ad" strokeWidth="0.9" />
            <path d="M7.5 14.5 Q7.5 11.5 10.5 11 Q9.3 9.8 9.5 8 Q10 6.3 11.5 6.3 Q13.2 6.3 13.5 8 Q13.7 9.8 12.5 11 Q15.5 11.5 15.5 14.5 Z" fill="#00ed64" />
            <path d="M16.5 14.5 H21 Q21 11.5 18.3 11 Q19.4 10 19.2 8.3 Q18.9 6.8 17.2 6.8 Q15.6 6.8 15.3 8.3 Q15.1 10 16.3 11" stroke="#c1c7c6" strokeWidth="1" />
          </svg>
        </div>
      </div>
    </section>
  );
}

/* ---------- taskbar ---------- */

function Chrome({ face }: { face?: boolean }) {
  return (
    <svg width="32" height="32" viewBox="0 0 32 32" className="overflow-visible">
      <path d="M15 8 H28.2 A15 15 0 0 0 2 7.5 L8.6 18.6 L15 15 Z" fill="#e33b2e" />
      <path d="M15 15 L8.6 18.6 L2 7.5 A15 15 0 0 0 14.5 30 L21.5 18 Z" fill="#2ba24c" />
      <path d="M21.5 18 L14.5 30 A15 15 0 0 0 28.2 8 H15 Z" fill="#fcc31e" />
      <circle cx="15" cy="15" r="7" fill="#fff" />
      <circle cx="15" cy="15" r="5.6" fill="#2f7de6" />
      {face && (
        <g>
          <circle cx="22" cy="22" r="10" fill="#5d7538" />
          <path d="M12.5 19 A10 10 0 0 1 31.5 19 L29 20 H16 Z" fill="#7d3a22" />
          <circle cx="18" cy="17.8" r="3.8" fill="#d8341c" />
          <circle cx="26" cy="17.6" r="4" fill="#c92a16" />
          <path d="M16 28 L20 22 M28 28 L24 22 M21 31 L23 23 M18 30 L19 25" stroke="#9cb37c" strokeWidth="1.1" fill="none" />
        </g>
      )}
    </svg>
  );
}

function Taskbar() {
  return (
    <footer className="flex h-[50px] shrink-0 items-center bg-[#101010] font-['Open_Sans','Noto_Sans',sans-serif] text-white">
      <div className="flex w-[60px] justify-center">
        <svg width="21" height="21" viewBox="0 0 21 21" fill="#fff">
          <path d="M0 3 L8.8 1.8 V9.8 H0 Z M9.8 1.6 L21 0 V9.8 H9.8 Z M0 10.8 H8.8 V18.9 L0 17.7 Z M9.8 10.8 H21 V20.8 L9.8 19.2 Z" />
        </svg>
      </div>
      <div className="flex h-[50px] w-[360px] items-center border border-[#6a6a6a] bg-[#3f3f3f] pl-[14px]">
        <svg width="21" height="21" viewBox="0 0 21 21" fill="none" stroke="#fff" strokeWidth="1.4">
          <circle cx="13" cy="7.5" r="6.3" />
          <path d="M8.5 12 L0.8 20" />
        </svg>
        <span className="ml-[14px] text-[17.5px] tracking-[-0.15px] text-[#dedede]">Type here to search</span>
      </div>
      <div className="flex w-[61px] justify-end pr-[20px]">
        <svg width="21" height="20" viewBox="0 0 21 20" fill="none" stroke="#fff" strokeWidth="1.3">
          <path d="M1 0 V3.5 H13.5 V0 M1 20 V16.5 H13.5 V20 M1 6 H13.5 V14 H1 Z M19 0 V4 M19 10.5 V20" />
          <rect x="17.5" y="6" width="3" height="3" fill="#fff" stroke="none" />
        </svg>
      </div>
      <div className="flex w-[66px] justify-center">
        <svg width="30" height="30" viewBox="0 0 30 30">
          <ellipse cx="9" cy="19" rx="8" ry="4" fill="#8b8b8b" />
          <ellipse cx="14" cy="9.5" rx="13" ry="7.5" transform="rotate(-28 14 9.5)" fill="#f3f3f3" stroke="#d3322c" strokeWidth="1.6" />
          <path d="M12 3 L18 21 M6 14 L24 5" stroke="#9a9a9a" strokeWidth="1.2" />
          <ellipse cx="18.5" cy="24" rx="3" ry="5" fill="none" stroke="#1f83d6" strokeWidth="2" transform="rotate(12 18.5 24)" />
          <ellipse cx="25" cy="19" rx="4.5" ry="2.6" fill="none" stroke="#1f83d6" strokeWidth="2" transform="rotate(30 25 19)" />
        </svg>
      </div>
      <div className="flex w-[58px] justify-center">
        <svg width="28" height="25" viewBox="0 0 28 25">
          <path d="M0 3 Q0 1 2 1 H11 L14 4 V8 H0 Z" fill="#e9a414" />
          <path d="M0 5 H10 L13 3 H27 V23 H0 Z" fill="#fdd35f" />
          <path d="M5 24 V15 Q5 13 7 13 H21 Q23 13 23 15 V24 H18 V18 H10 V24 Z" fill="#3a97de" />
        </svg>
      </div>
      <div className="flex w-[66px] justify-center">
        <svg width="31" height="31" viewBox="0 0 31 31">
          <defs>
            <linearGradient id="edgeTop" x1="0" x2="1" y1="0" y2="0.6">
              <stop offset="0" stopColor="#1fa0e6" /><stop offset="0.5" stopColor="#2cc3d8" /><stop offset="1" stopColor="#6ee04a" />
            </linearGradient>
          </defs>
          <circle cx="15.5" cy="15.5" r="15" fill="#1177d0" />
          <path d="M0.5 15 C1 5 8 0.5 15.5 0.5 C25 0.5 30.5 7 30.5 14 C30.5 18 27 20.5 23 20.5 C19 20.5 17 19 18 17 C19.5 13 16 9.5 11 9.5 C6 9.5 2 12 0.5 15 Z" fill="url(#edgeTop)" />
          <path d="M11 13 C7 18 10 27 18 30 C22 30 27 27 29 23 C24 25 18 24 16 20 C14 17 15 13 16.5 12 C15 11 12.5 11.5 11 13 Z" fill="#124f92" />
          <path d="M16 14 C14 19 18 24 28.5 22.5 L31 18 C27 21 19 22 17.5 18 Z" fill="#101010" />
        </svg>
      </div>
      <div className="flex w-[58px] justify-center">
        <svg width="31" height="31" viewBox="0 0 31 31">
          <circle cx="15.5" cy="15.5" r="13" fill="#3c8c3a" />
          <circle cx="15.5" cy="15.5" r="14" fill="none" stroke="#3c8c3a" strokeWidth="3" strokeDasharray="3 2.5" />
          <path d="M28 6 C33 18 27 30 14 30 C8 30 5 27 5 24 C5 14 22 18 28 6 Z" fill="#79c143" />
          <path d="M8 26 C16 26 24 22 27 13" stroke="#3c8c3a" strokeWidth="1.4" fill="none" />
        </svg>
      </div>
      <div className="flex w-[66px] justify-center">
        <svg width="30" height="31" viewBox="0 0 30 31">
          <path d="M6 0 L29 3 L27 24 L7 21 Z" fill="#d9dce2" />
          <path d="M8 2 L27 5 L25 21 L9 18 Z" fill="#1330c4" />
          <ellipse cx="17" cy="27" rx="9" ry="3.5" fill="#bfc0c4" />
          <path d="M14 22 H21 L22 27 H13 Z" fill="#dedfe2" />
          <path d="M0 5 L23 6 V16 L1 15 Z" fill="#eef3fb" />
          <path d="M2 7.5 L22 8.3 M2 10 L22 10.8 M2 12.6 L22 13.5" stroke="#3c8ce0" strokeWidth="1.6" strokeDasharray="1.6 1" />
        </svg>
      </div>
      <div className="relative flex w-[58px] justify-center">
        <svg width="31" height="31" viewBox="0 0 31 31" className="-ml-px">
          <path d="M15.5 0.5 A15 15 0 1 1 8 28.5 L0.5 30.5 L2.5 23 A15 15 0 0 1 15.5 0.5 Z" fill="#fff" />
          <path d="M15.5 3 A12.4 12.4 0 1 1 8.5 25.8 L4 27 L5.2 22.6 A12.4 12.4 0 0 1 15.5 3 Z" fill="#41c452" />
          <path d="M10.5 8.5 L12.6 8.8 L13.8 11.8 L12.4 13.6 Q14.5 17.5 18 19 L19.6 17.4 L22.4 19 Q22 22 19 22 Q10 20.5 8.6 12 Q8.6 9.5 10.5 8.5 Z" fill="#fff" />
        </svg>
        <span className="absolute top-[14px] left-[24px] flex h-[21px] w-[36px] items-center justify-center rounded-full border border-[#8c8c8c] bg-[#2c2d2e]/95 text-[14px] leading-none font-bold">99+</span>
      </div>
      <div className="flex w-[68px] justify-center"><Chrome /></div>
      <div className="relative ml-[2px] flex h-full w-[51px] items-center justify-center pb-px">
        <Chrome face />
        <span className="absolute bottom-0 left-0 h-[3px] w-full bg-[#69d8e8]" />
      </div>

      <div className="ml-auto flex h-full items-center">
        <svg width="32" height="34" viewBox="0 0 32 34">
          <path d="M12 2 Q16 10 8 15 Q4 17 0.5 16 Q4 24 13 22 Q22 18 19 9 Q17 4 12 2 Z" fill="#f4a92b" />
          <path d="M7 32 Q0 32 0 26 Q0 20 6 20 Q9 13 16 13 Q23 13 25 19 Q31 19 31 26 Q31 32 25 32 Z" fill="#a9c6f5" />
          <path d="M7 32 Q0 32 0 27 Q2 23 8 25 Q14 19 19 25 Q26 22 31 27 Q30 32 25 32 Z" fill="#d9e6fb" />
          <circle cx="23" cy="9" r="7.6" fill="#c42b1c" />
          <path d="M21 6.6 L23.4 5 V13" fill="none" stroke="#fff" strokeWidth="1.3" />
        </svg>
        <span className="ml-[9px] w-[47px] text-[18px] tracking-[-0.9px]">16°C</span>
        <span className="w-[142px] text-[18px] tracking-[-0.2px] whitespace-nowrap">Mostly cloudy</span>
        <svg width="17" height="10" viewBox="0 0 17 10" fill="none" stroke="#fff" strokeWidth="1.3"><path d="M0.8 9 L8.5 1 L16.2 9" /></svg>
        <svg width="15" height="19" viewBox="0 0 15 19" fill="none" stroke="#fff" strokeWidth="1.3" className="ml-[15px]">
          <rect x="1" y="4.5" width="9" height="10" rx="1.5" />
          <path d="M10 8.5 L13.5 6.5 V12.5 L10 10.5 M2 2 Q6 0 10 2 M2 17 Q6 19 10 17" />
        </svg>
        <svg width="21" height="14" viewBox="0 0 21 14" className="ml-[11px]">
          <path d="M5 13 Q0.5 12.5 0.5 9 Q1 5.5 4.5 5.5 Q6 0.5 11 0.8 Q15 1 16 5 Q20.5 5.5 20.5 9.5 Q20 13 16.5 13 Z" fill="#fff" />
          <path d="M5 13 Q0.5 12.5 0.5 9 Q1 5.5 4.5 5.5 Q6 0.5 11 0.8 Q14 1 15.5 4 L7 11 Z" fill="#c6c6c6" />
        </svg>
        <svg width="21" height="14" viewBox="0 0 21 14" fill="none" stroke="#fff" strokeWidth="1.2" className="ml-[8px]">
          <rect x="5.5" y="3.5" width="13" height="8" />
          <rect x="7" y="5" width="10" height="5" fill="#fff" stroke="none" />
          <path d="M19.8 5.5 V9.5 M1 1 V4 H5 V1 M3 4 V9 H5" />
        </svg>
        <svg width="16" height="17" viewBox="0 0 16 17" fill="none" stroke="#fff" strokeWidth="1.3" className="ml-[12px]">
          <path d="M1 14 Q2 3 14 1.5 M4.5 16 Q5 7 14.5 5.5 M8.5 16 Q9 10.5 15 9.5" />
          <circle cx="13" cy="14.5" r="1.6" fill="#fff" stroke="none" />
        </svg>
        <svg width="19" height="14" viewBox="0 0 19 14" fill="none" stroke="#fff" strokeWidth="1.2" className="ml-[10px]">
          <path d="M1 4.5 H3.5 L7 1 V13 L3.5 9.5 H1 Z M11 4 L17.5 10.5 M17.5 4 L11 10.5" />
        </svg>
        <div className="ml-[11px] flex w-[37px] flex-col items-center text-[14.5px] leading-6 tracking-[-0.5px]">
          <span>ENG</span>
          <span>IN</span>
        </div>
        <div className="ml-[4px] flex w-[88px] flex-col items-center text-[14.5px] leading-6 tracking-[-0.3px]">
          <span>8:50 PM</span>
          <span>11/23/2023</span>
        </div>
        <div className="relative ml-[12px] h-[34px] w-[31px]">
          <svg width="20" height="21" viewBox="0 0 20 21" className="mt-[2px]">
            <path d="M0 0 H20 V16 H12 L8 20 V16 H0 Z" fill="#fff" />
            <path d="M4 4.5 H16 M4 8 H16 M4 11.5 H12" stroke="#101010" strokeWidth="1.3" />
          </svg>
          <span className="absolute top-[11px] left-[10px] flex h-[21px] w-[21px] items-center justify-center rounded-full border border-[#8c8c8c] bg-[#3a3a3a] text-[13px] leading-none font-semibold">3</span>
        </div>
        <span className="mr-[5px] ml-[13px] h-full w-px bg-[#4a4a4a]" />
      </div>
    </footer>
  );
}

export default function App() {
  return (
    <div className="flex h-[947px] w-[1920px] flex-col overflow-hidden bg-white font-['Lato','Open_Sans',sans-serif] text-[#001e2b]">
      <Header />
      <main className="flex flex-1 flex-col bg-[#f9fbfa] px-[18px] pt-[15px] pb-[18px]">
        <QueryBar />
        <div className="mt-[18px] flex min-h-0 flex-1 gap-[18px]">
          <FieldsPanel />
          <div className="flex w-[292px] flex-col gap-[18px]">
            <ChartTypePanel />
            <EncodePanel />
          </div>
          <PreviewPanel />
        </div>
      </main>
      <Taskbar />
      <div className="h-[4px] shrink-0 bg-white" />
    </div>
  );
}
